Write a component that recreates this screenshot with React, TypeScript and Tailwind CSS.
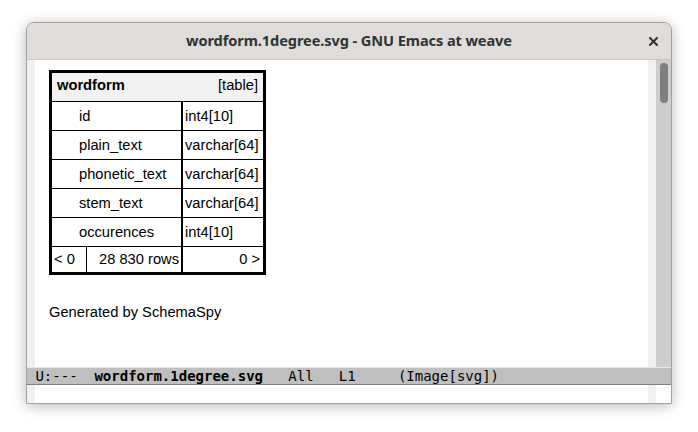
export default function App() {
  const rows = [
    { name: 'id', type: 'int4[10]' },
    { name: 'plain_text', type: 'varchar[64]' },
    { name: 'phonetic_text', type: 'varchar[64]' },
    { name: 'stem_text', type: 'varchar[64]' },
    { name: 'occurences', type: 'int4[10]' },
  ];

  return (
    <div className="w-[698px] h-[432px] bg-white pl-[26px] pt-[22px] overflow-hidden">
      <div className="w-[646px] h-[382px] flex flex-col border border-[#a3a09d] rounded-t-[8px] bg-white shadow-[0_2px_14px_rgba(0,0,0,0.28)] overflow-hidden">
        {/* title bar */}
        <div className="h-[37px] shrink-0 flex items-center justify-center relative bg-[#dfdcd9] border-b border-[#c8c5c2] font-['Noto_Sans',sans-serif]">
          <span className="text-[14.6px] font-bold text-[#2e3436] tracking-[-0.1px]">wordform.1degree.svg - GNU Emacs at weave</span>
          <svg className="absolute right-[13px] top-[14px]" width="9" height="9" viewBox="0 0 9 9">
            <path d="M1 1L8 8M8 1L1 8" stroke="#2e3436" strokeWidth="2" strokeLinecap="square" />
          </svg>
        </div>

        {/* buffer */}
        <div className="flex-1 flex min-h-0">
          <div className="w-[8px] bg-[#f0f0f0]" />
          <div className="flex-1 bg-white pl-[14px] pt-[10px] font-['Liberation_Sans',sans-serif] text-[14.7px] text-black">
            <div className="w-[217px] border-[3px] border-black">
              <div className="h-[29px] bg-[#f2f2f2] flex items-center justify-between pl-[5px] pr-[5px] pb-[3px] border-b border-black">
                <span className="font-bold">wordform</span>
                <span>[table]</span>
              </div>
              {rows.map((r) => (
                <div key={r.name} className="h-[29px] flex border-b border-black">
                  <div className="w-[131px] border-r-2 border-black flex items-center pl-[27px]">{r.name}</div>
                  <div className="flex-1 flex items-center pl-[2px]">{r.type}</div>
                </div>
              ))}
              <div className="h-[25px] flex">
                <div className="w-[35px] border-r border-black flex items-center pl-[2px]">&lt; 0</div>
                <div className="w-[96px] border-r-2 border-black flex items-center justify-end pr-[2px]">28 830 rows</div>
                <div className="flex-1 flex items-center justify-end pr-[3px]">0 &gt;</div>
              </div>
            </div>
            <div className="mt-[26px]">Generated by SchemaSpy</div>
          </div>
          <div className="w-[8px] bg-[#f0f0f0]" />
          <div className="w-[15px] bg-[#cdcdcd] pt-[3px] flex justify-center">
            <div className="w-[8px] h-[40px] rounded-full bg-[#7d7f80]" />
          </div>
        </div>

        {/* mode line */}
        <div className="h-[18px] shrink-0 bg-[#bfbfbf] border-t border-[#e6e6e6] border-b border-b-[#7f7f7f] flex items-center font-['DejaVu_Sans_Mono',monospace] text-[14px] text-black whitespace-pre leading-none">
          <span> U:---  </span>
          <span className="font-bold">wordform.1degree.svg</span>
          <span>   All   L1     (Image[svg])</span>
        </div>

        {/* echo area */}
        <div className="h-[18px] shrink-0 flex">
          <div className="w-[8px] bg-[#f0f0f0]" />
          <div className="flex-1 bg-white" />
          <div className="w-[8px] bg-[#f0f0f0]" />
          <div className="w-[15px] bg-white" />
        </div>
      </div>
    </div>
  );
}
